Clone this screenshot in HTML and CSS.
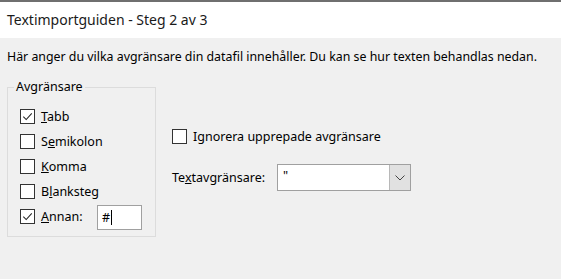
FILE: index.html
```html
<!DOCTYPE html>
<html lang="sv">
<head>
<meta charset="utf-8">
<link rel="stylesheet" href="styles.css">
</head>
<body>
<div class="titlebar">Textimportguiden - Steg 2 av 3</div>
<p class="intro">Här anger du vilka avgränsare din datafil innehåller. Du kan se hur texten behandlas nedan.</p>
<div class="main">
  <fieldset class="group">
    <legend>Avgränsare</legend>
    <div class="row"><span class="cb checked"><svg viewBox="0 0 14 14"><path d="M2.5 7.2 L5.6 10.3 L11.6 3.6"/></svg></span><span class="label"><u>T</u>abb</span></div>
    <div class="row"><span class="cb"></span><span class="label">S<u>e</u>mikolon</span></div>
    <div class="row"><span class="cb"></span><span class="label"><u>K</u>omma</span></div>
    <div class="row"><span class="cb"></span><span class="label">B<u>l</u>anksteg</span></div>
    <div class="row"><span class="cb checked"><svg viewBox="0 0 14 14"><path d="M2.5 7.2 L5.6 10.3 L11.6 3.6"/></svg></span><span class="label annan"><u>A</u>nnan:</span><span class="textbox">#<span class="caret"></span></span></div>
  </fieldset>
  <div class="right">
    <div class="row"><span class="cb"></span><span class="label">I<u>g</u>norera upprepade avgränsare</span></div>
    <div class="row combo-row"><span class="label qlabel">Te<u>x</u>tavgränsare:</span>
      <div class="combo"><span class="value">"</span><span class="drop"><svg viewBox="0 0 10 6"><path d="M0.5 0.5 L5 5 L9.5 0.5"/></svg></span></div>
    </div>
  </div>
</div>
</body>
</html>
```
FILE: styles.css
```css
html, body {
  margin: 0;
  padding: 0;
}
body {
  background: #f0f0f0;
  font-family: "Noto Sans", "Open Sans", sans-serif;
  font-size: 12.5px;
  color: #000;
  width: 561px;
  height: 279px;
  overflow: hidden;
}
.titlebar {
  background: #fff;
  border-top: 2px solid #6f6f6f;
  height: 36px;
  line-height: 36px;
  padding-left: 7px;
  font-size: 14px;
  color: #1a1a1a;
}
.intro {
  margin: 10px 0 0 7px;
  line-height: 18px;
  font-size: 12.36px;
}
.main {
  display: flex;
  align-items: flex-start;
  padding-left: 7px;
  margin-top: 13px;
}
.group {
  margin: 0;
  width: 149px;
  box-sizing: border-box;
  border: 1px solid #dcdcdc;
  padding: 9px 0 7px 12px;
  display: flex;
  flex-direction: column;
  gap: 0;
}
.group legend {
  padding: 0 2px;
  margin-left: -6px;
  line-height: 16px;
}
.row {
  display: flex;
  align-items: center;
  height: 25px;
}
.cb {
  width: 15px;
  height: 15px;
  box-sizing: border-box;
  border: 1px solid #333;
  background: #fff;
  display: inline-flex;
  flex: none;
}
.cb svg {
  width: 13px;
  height: 13px;
}
.cb svg path {
  fill: none;
  stroke: #222;
  stroke-width: 1.1;
}
.label {
  margin-left: 6px;
}
.annan {
  width: 56px;
  flex: none;
}
.textbox {
  width: 45px;
  height: 25px;
  flex: none;
  box-sizing: border-box;
  border: 1px solid #a0a0a0;
  background: #fff;
  display: flex;
  align-items: center;
  padding-left: 4px;
  margin-top: 1px;
}
.caret {
  display: inline-block;
  width: 1px;
  height: 15px;
  background: #000;
  margin-left: 1px;
}
.right {
  margin-left: 16px;
  padding-top: 45px;
  display: flex;
  flex-direction: column;
}
.combo-row {
  margin-top: 15px;
  height: 27px;
}
.qlabel {
  margin-left: 0;
  width: 105px;
}
.combo {
  width: 134px;
  height: 27px;
  box-sizing: border-box;
  border: 1px solid #a0a0a0;
  background: #fff;
  display: flex;
}
.combo .value {
  flex: 1;
  padding-left: 5px;
  line-height: 22px;
  color: #000;
}
.drop {
  width: 20px;
  background: #e1e1e1;
  border-left: 1px solid #b8b8b8;
  display: flex;
  align-items: center;
  justify-content: center;
}
.drop svg {
  width: 10px;
  height: 6px;
}
.drop svg path {
  fill: none;
  stroke: #444;
  stroke-width: 1;
}
```
